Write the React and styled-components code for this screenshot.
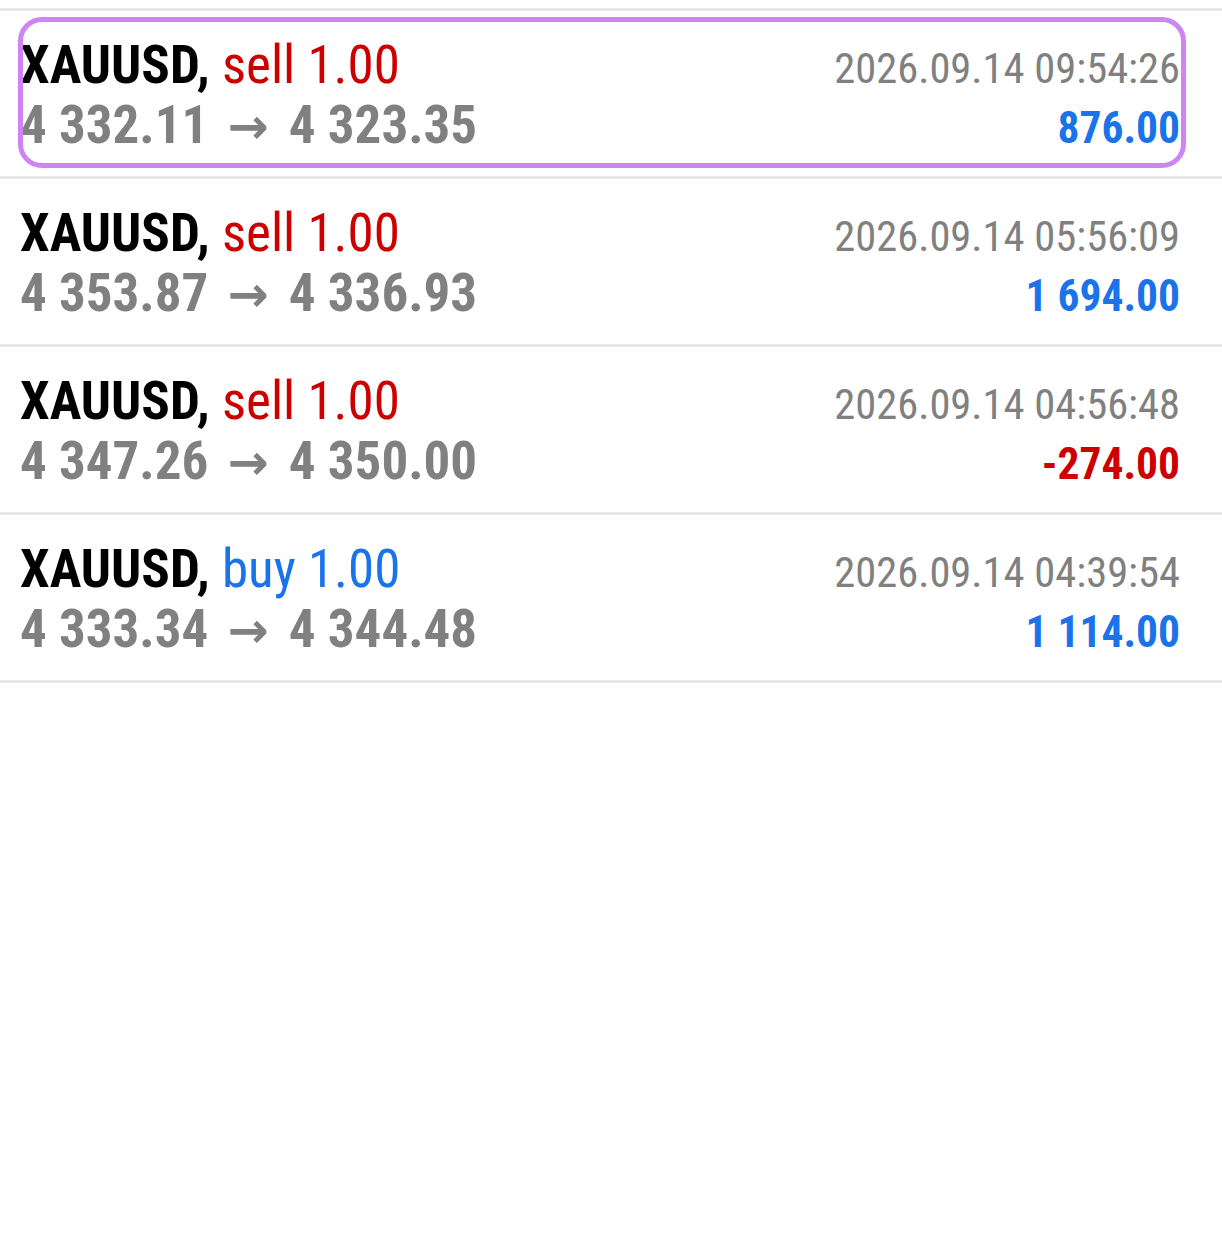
import React from "react";
import styled, { createGlobalStyle } from "styled-components";

const Global = createGlobalStyle`
  body {
    margin: 0;
    background: #ffffff;
    font-family: "Roboto Condensed", "Liberation Sans Narrow", Roboto, sans-serif;
    font-stretch: condensed;
  }
`;

const List = styled.div`
  padding-top: 8px;
  width: 1222px;
`;

const Row = styled.div`
  position: relative;
  height: 168px;
  border-top: 3px solid #e8e8e8;
  padding: 24px 42px 0 20px;
  box-sizing: border-box;
  &:last-child {
    border-bottom: 3px solid #e8e8e8;
    height: 171px;
  }
`;

const Highlight = styled.div`
  position: absolute;
  left: 18px;
  right: 36px;
  top: 6px;
  bottom: 8px;
  border: 5px solid #cd85f6;
  border-radius: 24px;
  pointer-events: none;
`;

const Line = styled.div`
  display: flex;
  justify-content: space-between;
  align-items: baseline;
  height: 60px;
  line-height: 60px;
  white-space: nowrap;
`;

const Title = styled.span`
  font-size: 53px;
`;

const Symbol = styled.span`
  font-weight: 700;
  color: #000;
`;

const Side = styled.span`
  font-weight: 400;
  color: ${(p) => (p.$buy ? "#1a73e8" : "#cc0000")};
`;

const Prices = styled.span`
  font-size: 53px;
  font-weight: 700;
  color: #808080;
`;

const Arrow = styled.span`
  font-family: "DejaVu Sans", sans-serif;
  font-stretch: normal;
  font-size: 49px;
  font-weight: 700;
  margin: 0 8px 0 7px;
`;

const Time = styled.span`
  font-size: 42.5px;
  color: #808080;
`;

const Profit = styled.span`
  font-size: 43.5px;
  font-weight: 700;
  color: ${(p) => (p.$loss ? "#cc0000" : "#1a73e8")};
`;

const trades = [
  { side: "sell", open: "4 332.11", close: "4 323.35", time: "2026.09.14 09:54:26", profit: "876.00", active: true },
  { side: "sell", open: "4 353.87", close: "4 336.93", time: "2026.09.14 05:56:09", profit: "1 694.00" },
  { side: "sell", open: "4 347.26", close: "4 350.00", time: "2026.09.14 04:56:48", profit: "-274.00" },
  { side: "buy", open: "4 333.34", close: "4 344.48", time: "2026.09.14 04:39:54", profit: "1 114.00" },
];

export default function App() {
  return (
    <>
      <Global />
      <List>
        {trades.map((t) => (
          <Row key={t.time}>
            <Line>
              <Title>
                <Symbol>XAUUSD,</Symbol> <Side $buy={t.side === "buy"}>{t.side} 1.00</Side>
              </Title>
              <Time>{t.time}</Time>
            </Line>
            <Line>
              <Prices>
                {t.open} <Arrow>→</Arrow> {t.close}
              </Prices>
              <Profit $loss={t.profit.startsWith("-")}>{t.profit}</Profit>
            </Line>
            {t.active && <Highlight />}
          </Row>
        ))}
      </List>
    </>
  );
}
